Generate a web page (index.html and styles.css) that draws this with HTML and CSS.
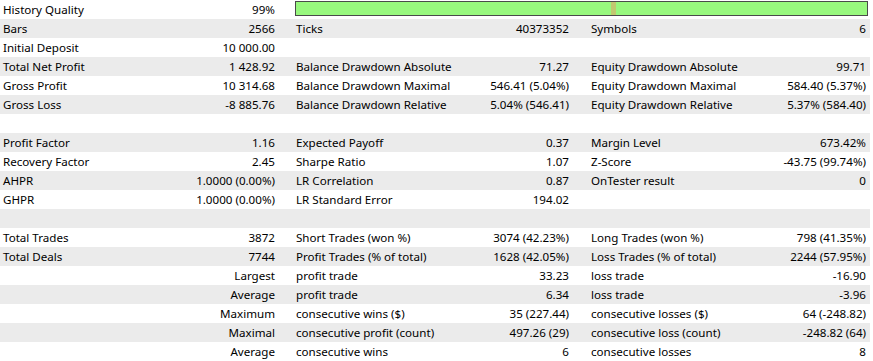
FILE: index.html
```html
<!DOCTYPE html>
<html>
<head>
<meta charset="utf-8">
<link rel="stylesheet" href="styles.css">
</head>
<body>
<div class="report">
  <div class="row">
    <span class="lbl">History Quality</span><span class="val">99%</span>
    <div class="bar"><div class="mark"></div></div>
  </div>
  <div class="row alt">
    <span class="lbl">Bars</span><span class="val">2566</span>
    <span class="lbl l2">Ticks</span><span class="val">40373352</span>
    <span class="lbl l3">Symbols</span><span class="val">6</span>
  </div>
  <div class="row">
    <span class="lbl">Initial Deposit</span><span class="val">10 000.00</span>
    <span class="lbl l2"></span><span class="val"></span>
    <span class="lbl l3"></span><span class="val"></span>
  </div>
  <div class="row alt">
    <span class="lbl">Total Net Profit</span><span class="val">1 428.92</span>
    <span class="lbl l2">Balance Drawdown Absolute</span><span class="val">71.27</span>
    <span class="lbl l3">Equity Drawdown Absolute</span><span class="val">99.71</span>
  </div>
  <div class="row">
    <span class="lbl">Gross Profit</span><span class="val">10 314.68</span>
    <span class="lbl l2">Balance Drawdown Maximal</span><span class="val">546.41 (5.04%)</span>
    <span class="lbl l3">Equity Drawdown Maximal</span><span class="val">584.40 (5.37%)</span>
  </div>
  <div class="row alt">
    <span class="lbl">Gross Loss</span><span class="val">-8 885.76</span>
    <span class="lbl l2">Balance Drawdown Relative</span><span class="val">5.04% (546.41)</span>
    <span class="lbl l3">Equity Drawdown Relative</span><span class="val">5.37% (584.40)</span>
  </div>
  <div class="row"></div>
  <div class="row alt">
    <span class="lbl">Profit Factor</span><span class="val">1.16</span>
    <span class="lbl l2">Expected Payoff</span><span class="val">0.37</span>
    <span class="lbl l3">Margin Level</span><span class="val">673.42%</span>
  </div>
  <div class="row">
    <span class="lbl">Recovery Factor</span><span class="val">2.45</span>
    <span class="lbl l2">Sharpe Ratio</span><span class="val">1.07</span>
    <span class="lbl l3">Z-Score</span><span class="val">-43.75 (99.74%)</span>
  </div>
  <div class="row alt">
    <span class="lbl">AHPR</span><span class="val">1.0000 (0.00%)</span>
    <span class="lbl l2">LR Correlation</span><span class="val">0.87</span>
    <span class="lbl l3">OnTester result</span><span class="val">0</span>
  </div>
  <div class="row">
    <span class="lbl">GHPR</span><span class="val">1.0000 (0.00%)</span>
    <span class="lbl l2">LR Standard Error</span><span class="val">194.02</span>
    <span class="lbl l3"></span><span class="val"></span>
  </div>
  <div class="row alt"></div>
  <div class="row">
    <span class="lbl">Total Trades</span><span class="val">3872</span>
    <span class="lbl l2">Short Trades (won %)</span><span class="val">3074 (42.23%)</span>
    <span class="lbl l3">Long Trades (won %)</span><span class="val">798 (41.35%)</span>
  </div>
  <div class="row alt">
    <span class="lbl">Total Deals</span><span class="val">7744</span>
    <span class="lbl l2">Profit Trades (% of total)</span><span class="val">1628 (42.05%)</span>
    <span class="lbl l3">Loss Trades (% of total)</span><span class="val">2244 (57.95%)</span>
  </div>
  <div class="row">
    <span class="lbl"></span><span class="val">Largest</span>
    <span class="lbl l2">profit trade</span><span class="val">33.23</span>
    <span class="lbl l3">loss trade</span><span class="val">-16.90</span>
  </div>
  <div class="row alt">
    <span class="lbl"></span><span class="val">Average</span>
    <span class="lbl l2">profit trade</span><span class="val">6.34</span>
    <span class="lbl l3">loss trade</span><span class="val">-3.96</span>
  </div>
  <div class="row">
    <span class="lbl"></span><span class="val">Maximum</span>
    <span class="lbl l2">consecutive wins ($)</span><span class="val">35 (227.44)</span>
    <span class="lbl l3">consecutive losses ($)</span><span class="val">64 (-248.82)</span>
  </div>
  <div class="row alt">
    <span class="lbl"></span><span class="val">Maximal</span>
    <span class="lbl l2">consecutive profit (count)</span><span class="val">497.26 (29)</span>
    <span class="lbl l3">consecutive loss (count)</span><span class="val">-248.82 (64)</span>
  </div>
  <div class="row">
    <span class="lbl"></span><span class="val">Average</span>
    <span class="lbl l2">consecutive wins</span><span class="val">6</span>
    <span class="lbl l3">consecutive losses</span><span class="val">8</span>
  </div>
</div>
</body>
</html>
```

FILE: styles.css
```css
html, body {
  margin: 0;
  padding: 0;
  background: #ffffff;
}

.report {
  width: 870px;
  font-family: "Noto Sans", "Open Sans", sans-serif;
  font-size: 11.6px;
  color: #000000;
}

.row {
  display: grid;
  grid-template-columns: 140px 132px 161px 133px 162px 135px;
  padding: 0 4px 0 3px;
  height: 19px;
  line-height: 19px;
  background: #ffffff;
  white-space: nowrap;
}

.row.alt {
  background: #ebebeb;
}

.lbl {
  text-align: left;
  overflow: visible;
}

.l2 {
  padding-left: 21px;
}

.l3 {
  padding-left: 22px;
}

.val {
  text-align: right;
}

.bar {
  grid-column: 3 / 7;
  position: relative;
  margin: 1px -2px 0 20px;
  height: 13px;
  border: 1px solid #4a4a4a;
  background: #98f87e;
}

.mark {
  position: absolute;
  left: 315px;
  top: 0;
  width: 5px;
  height: 13px;
  background: #c2c870;
}
```
